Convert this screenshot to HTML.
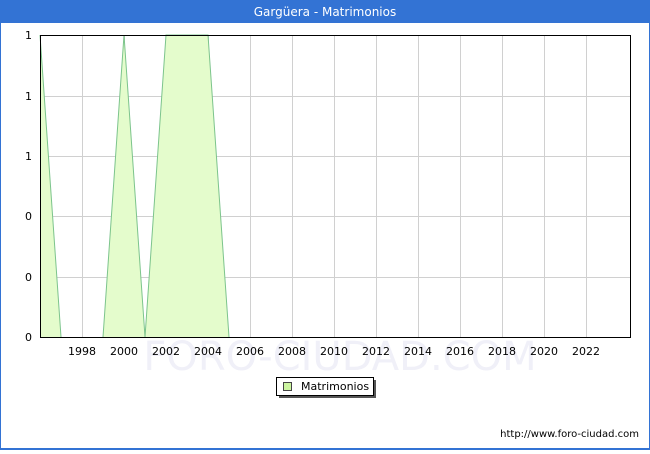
<!DOCTYPE html>
<html><head><style>
body{margin:0;width:650px;height:450px;overflow:hidden;background:#fff;font-family:"DejaVu Sans","Liberation Sans",sans-serif}
</style></head><body>
<svg width="650" height="450" xmlns="http://www.w3.org/2000/svg" font-family="DejaVu Sans, Liberation Sans, sans-serif">
<rect x="0" y="0" width="650" height="450" fill="#3373d4"/>
<rect x="1" y="23" width="648" height="425" fill="#fff"/>
<text x="325" y="16" fill="#fff" font-size="12" text-anchor="middle">Gargüera - Matrimonios</text>
<text x="340" y="370" fill="#f0f0f8" font-size="40" text-anchor="middle">FORO-CIUDAD.COM</text>
<g stroke="#d0d0d0" stroke-width="1">
<line x1="40" y1="96.5" x2="630" y2="96.5"/><line x1="40" y1="156.5" x2="630" y2="156.5"/><line x1="40" y1="216.5" x2="630" y2="216.5"/><line x1="40" y1="277.5" x2="630" y2="277.5"/>
<line x1="82.5" y1="35" x2="82.5" y2="337"/><line x1="124.5" y1="35" x2="124.5" y2="337"/><line x1="166.5" y1="35" x2="166.5" y2="337"/><line x1="208.5" y1="35" x2="208.5" y2="337"/><line x1="250.5" y1="35" x2="250.5" y2="337"/><line x1="292.5" y1="35" x2="292.5" y2="337"/><line x1="334.5" y1="35" x2="334.5" y2="337"/><line x1="376.5" y1="35" x2="376.5" y2="337"/><line x1="418.5" y1="35" x2="418.5" y2="337"/><line x1="460.5" y1="35" x2="460.5" y2="337"/><line x1="502.5" y1="35" x2="502.5" y2="337"/><line x1="544.5" y1="35" x2="544.5" y2="337"/><line x1="586.5" y1="35" x2="586.5" y2="337"/>
</g>
<path d="M40 35 L61 337 L103 337 L124 35 L145 337 L166 35 L208 35 L229 337 L40 337Z" fill="#e4fccc"/>
<path d="M40 35 L61 337 M103 337 L124 35 L145 337 L166 35 L208 35 L229 337" fill="none" stroke="#7cc48c" stroke-width="1"/>
<rect x="40.5" y="35.5" width="590" height="302" fill="none" stroke="#000" stroke-width="1"/>
<g font-size="11" fill="#000" text-anchor="end">
<text x="32" y="39">1</text><text x="32" y="100">1</text><text x="32" y="160">1</text><text x="32" y="220">0</text><text x="32" y="281">0</text><text x="32" y="341">0</text>
</g>
<g font-size="11" fill="#000" text-anchor="middle">
<text x="82" y="355">1998</text><text x="124" y="355">2000</text><text x="166" y="355">2002</text><text x="208" y="355">2004</text><text x="250" y="355">2006</text><text x="292" y="355">2008</text><text x="334" y="355">2010</text><text x="376" y="355">2012</text><text x="418" y="355">2014</text><text x="460" y="355">2016</text><text x="502" y="355">2018</text><text x="544" y="355">2020</text><text x="586" y="355">2022</text>
</g>
<rect x="279" y="380" width="97" height="18" fill="#555"/>
<rect x="276.5" y="377.5" width="97" height="18" fill="#fff" stroke="#000"/>
<rect x="283.5" y="382.5" width="8" height="8" fill="#ccf5a0" stroke="#444"/>
<text x="301" y="390" font-size="11">Matrimonios</text>
<text x="639" y="437" font-size="10" text-anchor="end">http://www.foro-ciudad.com</text>
</svg>
</body></html>
